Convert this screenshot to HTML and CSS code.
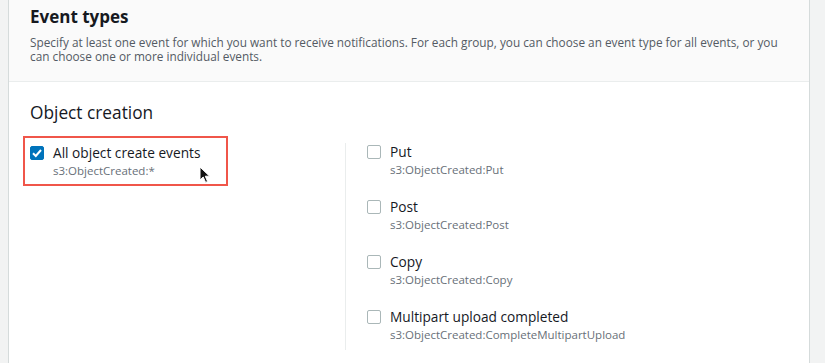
FILE: index.html
```html
<!DOCTYPE html>
<html lang="en">
<head>
    <meta charset="UTF-8">
    <title>Event types</title>
    <link rel="stylesheet" href="styles.css">
</head>
<body>
<div class="panel">
    <div class="panel-header">
        <h2>Event types</h2>
        <p class="desc">Specify at least one event for which you want to receive notifications. For each group, you can choose an event type for all events, or you can choose one or more individual events.</p>
    </div>
    <div class="panel-body">
        <h3>Object creation</h3>
        <div class="columns">
            <div class="col-left">
                <div class="option highlight">
                    <span class="box checked">
                        <svg width="14" height="14" viewBox="0 0 14 14"><path d="M3 7.2 L5.8 10 L11 4" fill="none" stroke="#fff" stroke-width="2"/></svg>
                    </span>
                    <div class="text">
                        <div class="label">All object create events</div>
                        <div class="code">s3:ObjectCreated:*</div>
                    </div>
                    <svg class="cursor" width="14" height="18" viewBox="0 0 14 18"><path d="M1 1 L1 14 L4.2 11 L6.6 16.4 L8.6 15.5 L6.3 10.2 L10.6 10.2 Z" fill="#111" stroke="#fff" stroke-width="1"/></svg>
                </div>
            </div>
            <div class="col-right">
                <div class="option">
                    <span class="box"></span>
                    <div class="text">
                        <div class="label">Put</div>
                        <div class="code">s3:ObjectCreated:Put</div>
                    </div>
                </div>
                <div class="option">
                    <span class="box"></span>
                    <div class="text">
                        <div class="label">Post</div>
                        <div class="code">s3:ObjectCreated:Post</div>
                    </div>
                </div>
                <div class="option">
                    <span class="box"></span>
                    <div class="text">
                        <div class="label">Copy</div>
                        <div class="code">s3:ObjectCreated:Copy</div>
                    </div>
                </div>
                <div class="option">
                    <span class="box"></span>
                    <div class="text">
                        <div class="label">Multipart upload completed</div>
                        <div class="code">s3:ObjectCreated:CompleteMultipartUpload</div>
                    </div>
                </div>
            </div>
        </div>
    </div>
</div>
</body>
</html>
```

FILE: styles.css
```css
body {
    margin: 0;
    background-color: #f2f3f3;
    font-family: "Open Sans", "Noto Sans", sans-serif;
    color: #16191f;
}
.panel {
    margin-left: 8px;
    width: 800px;
    height: 363px;
    background-color: #fff;
    border-left: 1px solid #d5dbdb;
    border-right: 1px solid #d5dbdb;
}
.panel-header {
    height: 82px;
    box-sizing: border-box;
    padding: 5px 20px 0 21px;
    background-color: #fafafa;
    border-bottom: 1px solid #eaeded;
}
h2 {
    margin: 0;
    font-size: 17px;
    font-weight: 700;
    line-height: 24px;
}
.desc {
    max-width: 748px;
    margin: 6px 0 0;
    font-size: 11.8px;
    line-height: 14px;
    color: #545b64;
}
.panel-body {
    padding: 18px 0 0 21px;
}
h3 {
    margin: 0;
    font-size: 17.3px;
    font-weight: 400;
    line-height: 26px;
}
.columns {
    display: flex;
    margin-top: 17px;
}
.col-left {
    width: 315px;
}
.col-right {
    border-left: 1px solid #eaeded;
    padding: 0 0 6px 21px;
    display: flex;
    flex-direction: column;
    gap: 19px;
}
.option {
    display: flex;
    align-items: flex-start;
    gap: 9px;
    position: relative;
}
.highlight {
    width: 196px;
    margin-left: -7px;
    margin-top: -7px;
    padding: 6px 0 4px 5px;
    border: 2px solid #f0564a;
}
.box {
    width: 14px;
    height: 14px;
    box-sizing: border-box;
    border: 1px solid #aab7b8;
    border-radius: 2px;
    margin-top: 2px;
    flex-shrink: 0;
}
.box.checked {
    background-color: #0073bb;
    border-color: #0073bb;
}
.box svg {
    display: block;
    margin: -1px;
}
.label {
    font-size: 13.7px;
    line-height: 18px;
}
.code {
    font-size: 11.5px;
    line-height: 18px;
    color: #687078;
}
.cursor {
    position: absolute;
    left: 174px;
    top: 28px;
}
```
